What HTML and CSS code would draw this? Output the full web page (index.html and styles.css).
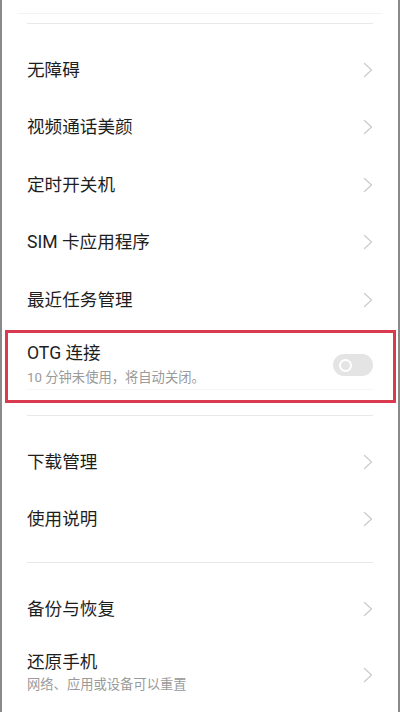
FILE: index.html
```html
<!DOCTYPE html>
<html lang="zh-CN">
<head>
<meta charset="utf-8">
<link rel="stylesheet" href="styles.css">
</head>
<body>
<div class="screen">
  <div class="faint-line"></div>
  <div class="divider first"></div>
  <div class="section">
    <div class="row"><span class="title">无障碍</span><svg class="chev" viewBox="0 0 10 16"><polyline points="1.5,1.5 8.5,8 1.5,14.5"/></svg></div>
    <div class="row"><span class="title">视频通话美颜</span><svg class="chev" viewBox="0 0 10 16"><polyline points="1.5,1.5 8.5,8 1.5,14.5"/></svg></div>
    <div class="row"><span class="title">定时开关机</span><svg class="chev" viewBox="0 0 10 16"><polyline points="1.5,1.5 8.5,8 1.5,14.5"/></svg></div>
    <div class="row"><span class="title">SIM 卡应用程序</span><svg class="chev" viewBox="0 0 10 16"><polyline points="1.5,1.5 8.5,8 1.5,14.5"/></svg></div>
    <div class="row"><span class="title">最近任务管理</span><svg class="chev" viewBox="0 0 10 16"><polyline points="1.5,1.5 8.5,8 1.5,14.5"/></svg></div>
    <div class="highlight">
      <div class="otg">
        <div class="texts">
          <div class="title">OTG 连接</div>
          <div class="sub">10 分钟未使用，将自动关闭。</div>
        </div>
        <div class="toggle"><span class="knob"></span></div>
      </div>
      <div class="otg-line"></div>
    </div>
  </div>
  <div class="divider mid1"></div>
  <div class="section">
    <div class="row"><span class="title">下载管理</span><svg class="chev" viewBox="0 0 10 16"><polyline points="1.5,1.5 8.5,8 1.5,14.5"/></svg></div>
    <div class="row"><span class="title">使用说明</span><svg class="chev" viewBox="0 0 10 16"><polyline points="1.5,1.5 8.5,8 1.5,14.5"/></svg></div>
  </div>
  <div class="divider mid2"></div>
  <div class="section">
    <div class="row"><span class="title">备份与恢复</span><svg class="chev" viewBox="0 0 10 16"><polyline points="1.5,1.5 8.5,8 1.5,14.5"/></svg></div>
    <div class="row tall">
      <div class="texts">
        <div class="title">还原手机</div>
        <div class="sub">网络、应用或设备可以重置</div>
      </div>
      <svg class="chev" viewBox="0 0 10 16"><polyline points="1.5,1.5 8.5,8 1.5,14.5"/></svg>
    </div>
  </div>
</div>
</body>
</html>
```

FILE: styles.css
```css
html, body {
  margin: 0;
  padding: 0;
  background: #ffffff;
}

.screen {
  width: 400px;
  height: 712px;
  box-sizing: border-box;
  border-left: 2px solid #8a8a8a;
  border-right: 2px solid #8a8a8a;
  background: #ffffff;
  overflow: hidden;
  font-family: Roboto, "Noto Sans CJK SC", sans-serif;
  color: #1e1e1e;
}

.faint-line {
  height: 1px;
  margin: 13px 16px 0 16px;
  background: #f3f3f3;
}

.divider {
  height: 1px;
  margin: 0 25px;
  background: #e8e8e8;
}

.divider.first {
  margin-top: 9px;
}

.divider.mid1 {
  margin-top: 12px;
}

.divider.mid2 {
  margin-top: 14px;
}

.section {
  padding-top: 17px;
}

.row {
  height: 57.5px;
  display: flex;
  align-items: center;
  justify-content: space-between;
  padding: 0 25px;
}

.row.tall {
  height: 70px;
  align-items: center;
}

.title {
  font-size: 17.6px;
  line-height: 24px;
  color: #1e1e1e;
}

.sub {
  font-size: 13.3px;
  line-height: 18px;
  color: #9a9a9a;
  margin-top: 2px;
}

.row.tall .texts {
  margin-top: -2px;
}

.chev {
  width: 10px;
  height: 16px;
  flex: none;
}

.chev polyline {
  fill: none;
  stroke: #cccccc;
  stroke-width: 1.3;
  stroke-linecap: round;
  stroke-linejoin: round;
}

.row.tall .chev {
  margin-top: 4px;
}

.highlight {
  margin: 1.5px 2px 0 3px;
  border: 3px solid #d93a4f;
  height: 67px;
  position: relative;
}

.otg {
  display: flex;
  align-items: center;
  justify-content: space-between;
  padding: 8px 20px 0 19px;
}

.otg .sub {
  margin-top: 4px;
}

.otg-line {
  height: 1px;
  margin: 2px 20px 0 19px;
  background: #f6f6f6;
}

.toggle {
  width: 40px;
  height: 22px;
  border-radius: 11px;
  background: #e4e4e4;
  display: flex;
  align-items: center;
  padding-left: 6px;
  box-sizing: border-box;
  margin-top: 2px;
}

.knob {
  width: 13px;
  height: 13px;
  box-sizing: border-box;
  border-radius: 50%;
  border: 2.5px solid #ffffff;
  background: #e4e4e4;
}
```
